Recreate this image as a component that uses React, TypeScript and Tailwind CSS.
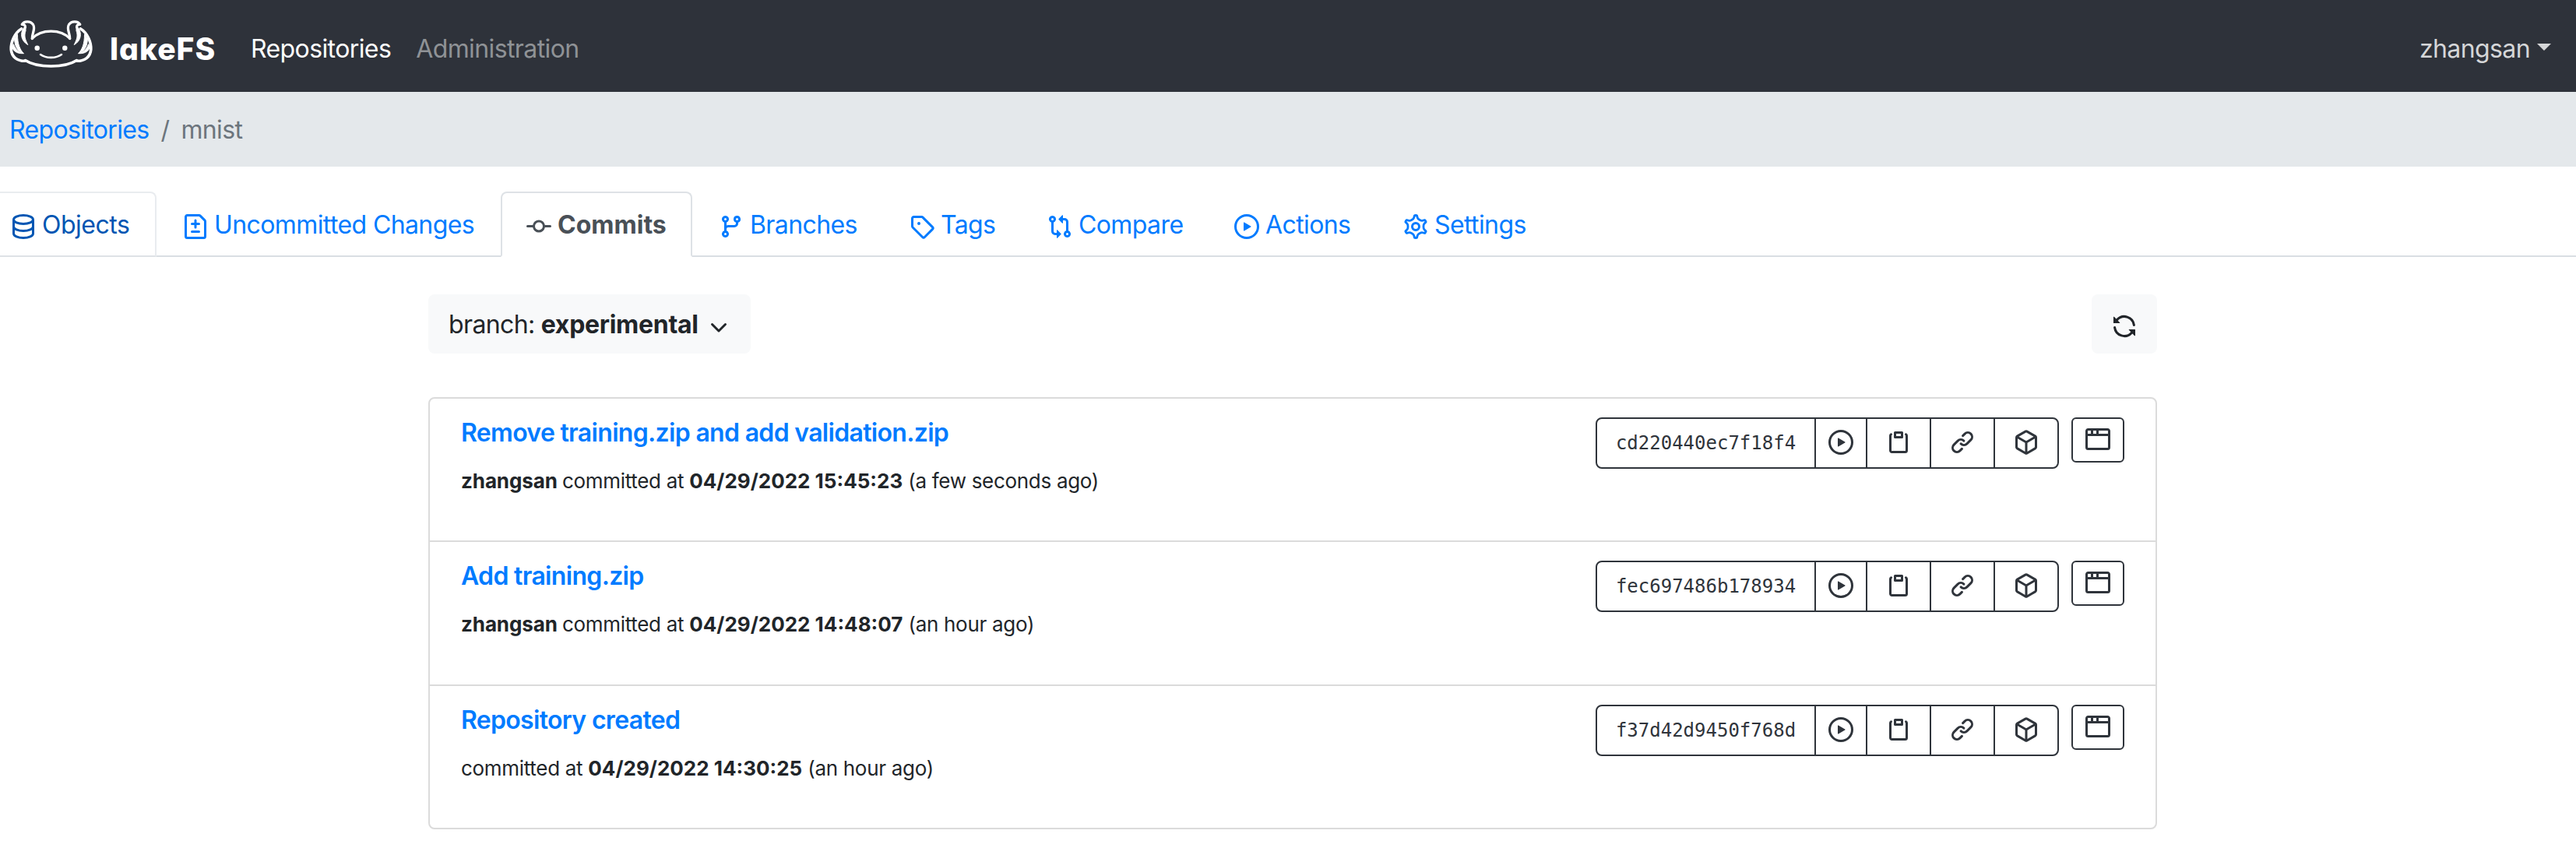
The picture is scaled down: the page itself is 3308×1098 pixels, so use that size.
import React from 'react';

function LogoSide() {
  return (
    <>
      <path d="M29.300 23.500 C29 17 34 11 30.500 5.500 C27 0.500 19 0.800 16.200 5.400 C20.500 5.500 21.500 8 19.700 11.500" strokeWidth="3.200" />
      <path d="M15.500 11 C7 16 1.800 28 2.200 37.500 C3 47 10 52.500 20.500 52.300" strokeWidth="3.600" />
      <path d="M19.500 8.500 C13.500 15 14 26 23.800 31.500 C20.500 25 18.500 20 21 13.500 Z" fill="#fff" strokeWidth="1" />
      <path d="M6.500 23.500 C6.800 33 10 40 18.500 42.800 C13.500 37.500 10.500 31 10.500 18.500 Z" fill="#fff" strokeWidth="1" />
      <path d="M3 34 C5 39.500 9.500 43 17.500 42.700 C12 41 8 38 5.500 31 Z" fill="#fff" strokeWidth="1" />
    </>
  );
}

function Logo() {
  return (
    <svg width="107" height="62" viewBox="0 0 107 62" fill="none" stroke="#fff" strokeLinecap="round" strokeLinejoin="round" className="-mt-[12px] block shrink-0">
      <LogoSide />
      <g transform="translate(107 0) scale(-1 1)"><LogoSide /></g>
      <path d="M29.300 23.500 C41 11 66 11 77.700 23.500" strokeWidth="3.200" />
      <path d="M20.500 51.500 C36 61.500 71 61.500 86.500 51.500" strokeWidth="3.400" />
      <path d="M40 44 C47 49.200 60 49.200 67 44" strokeWidth="2.600" />
      <circle cx="35.700" cy="35.700" r="3.200" fill="#fff" stroke="none" />
      <circle cx="71.300" cy="35.700" r="3.200" fill="#fff" stroke="none" />
    </svg>
  );
}

type IconProps = { className?: string };

function icon(d: string) {
  return function Icon({ className }: IconProps) {
    return (
      <svg viewBox="0 0 16 16" fill="currentColor" fillRule="evenodd" className={className}>
        <path d={d} />
      </svg>
    );
  };
}

const FileDiff = icon('M2.75 1.5a.25.25 0 00-.25.25v12.5c0 .138.112.25.25.25h10.5a.25.25 0 00.25-.25V4.664a.25.25 0 00-.073-.177l-2.914-2.914a.25.25 0 00-.177-.073H2.75zM1 1.75C1 .784 1.784 0 2.75 0h7.586c.464 0 .909.184 1.237.513l2.914 2.914c.329.328.513.773.513 1.237v9.586A1.75 1.75 0 0113.25 16H2.75A1.75 1.75 0 011 14.25V1.75zm7 1.5a.75.75 0 01.75.75v1.5h1.5a.75.75 0 010 1.5h-1.5v1.5a.75.75 0 01-1.5 0V7h-1.5a.75.75 0 010-1.5h1.5V4A.75.75 0 018 3.25zm-3 8a.75.75 0 01.75-.75h4.5a.75.75 0 010 1.5h-4.5a.75.75 0 01-.75-.75z');
const GitCommit = icon('M10.5 7.75a2.5 2.5 0 11-5 0 2.5 2.5 0 015 0zm1.43.75a4.002 4.002 0 01-7.86 0H.75a.75.75 0 110-1.5h3.32a4.001 4.001 0 017.86 0h3.32a.75.75 0 110 1.5h-3.32z');
const GitBranch = icon('M11.75 2.5a.75.75 0 100 1.5.75.75 0 000-1.5zm-2.25.75a2.25 2.25 0 113 2.122V6A2.5 2.5 0 0110 8.5H6a1 1 0 00-1 1v1.128a2.251 2.251 0 11-1.5 0V5.372a2.25 2.25 0 111.5 0v1.836A2.492 2.492 0 016 7h4a1 1 0 001-1v-.628A2.25 2.25 0 019.5 3.25zM4.25 12a.75.75 0 100 1.5.75.75 0 000-1.5zM3.5 3.25a.75.75 0 111.5 0 .75.75 0 01-1.5 0z');
const Tag = icon('M2.5 7.775V2.75a.25.25 0 01.25-.25h5.025a.25.25 0 01.177.073l6.25 6.25a.25.25 0 010 .354l-5.025 5.025a.25.25 0 01-.354 0l-6.25-6.25a.25.25 0 01-.073-.177zm-1.5 0V2.75C1 1.784 1.784 1 2.75 1h5.025c.464 0 .91.184 1.238.513l6.25 6.25a1.75 1.75 0 010 2.474l-5.026 5.026a1.75 1.75 0 01-2.474 0l-6.25-6.25A1.75 1.75 0 011 7.775zM6 5a1 1 0 100 2 1 1 0 000-2z');
const GitCompare = icon('M9.573.677L7.177 3.073a.25.25 0 000 .354l2.396 2.396A.25.25 0 0010 5.646V4h1a1 1 0 011 1v5.628a2.251 2.251 0 101.5 0V5A2.5 2.5 0 0011 2.5h-1V.854a.25.25 0 00-.427-.177zM6 12v-1.646a.25.25 0 01.427-.177l2.396 2.396a.25.25 0 010 .354l-2.396 2.396A.25.25 0 016 15.146V13.5H5A2.5 2.5 0 012.5 11V5.372a2.25 2.25 0 111.5 0V11a1 1 0 001 1h1zM4 3.25a.75.75 0 10-1.5 0 .75.75 0 001.5 0zM12.75 12a.75.75 0 100 1.5.75.75 0 000-1.5z');
const Play = icon('M1.5 8a6.5 6.5 0 1113 0 6.5 6.5 0 01-13 0zM8 0a8 8 0 100 16A8 8 0 008 0zM6.379 5.227A.25.25 0 006 5.442v5.117a.25.25 0 00.379.214l4.264-2.559a.25.25 0 000-.428L6.379 5.227z');
const ChevronDown = icon('M12.78 6.22a.75.75 0 010 1.06l-4.25 4.25a.75.75 0 01-1.06 0L3.22 7.28a.75.75 0 011.06-1.06L8 9.94l3.72-3.72a.75.75 0 011.06 0z');
const Sync = icon('M8 2.5a5.487 5.487 0 00-4.131 1.869l1.204 1.204A.25.25 0 014.896 6H1.25A.25.25 0 011 5.75V2.104a.25.25 0 01.427-.177l1.38 1.38A7.001 7.001 0 0114.95 7.16a.75.75 0 11-1.49.178A5.501 5.501 0 008 2.5zM1.705 8.005a.75.75 0 01.834.656 5.501 5.501 0 009.592 2.97l-1.204-1.204a.25.25 0 01.177-.427h3.646a.25.25 0 01.25.25v3.646a.25.25 0 01-.427.177l-1.38-1.38A7.001 7.001 0 011.05 8.84a.75.75 0 01.656-.834z');
const Paste = icon('M5.75 1a.75.75 0 00-.75.75v3c0 .414.336.75.75.75h4.5a.75.75 0 00.75-.75v-3a.75.75 0 00-.75-.75h-4.5zm.75 3V2.5h3V4h-3zm-2.874-.467a.75.75 0 00-.752-1.298A1.75 1.75 0 002 3.75v9.5c0 .966.784 1.75 1.75 1.75h8.5A1.75 1.75 0 0014 13.25v-9.5a1.75 1.75 0 00-.874-1.515.75.75 0 10-.752 1.298.25.25 0 01.126.217v9.5a.25.25 0 01-.25.25h-8.5a.25.25 0 01-.25-.25v-9.5a.25.25 0 01.126-.217z');
const Link = icon('M7.775 3.275a.75.75 0 001.06 1.06l1.25-1.25a2 2 0 112.83 2.83l-2.5 2.5a2 2 0 01-2.83 0 .75.75 0 00-1.06 1.06 3.5 3.5 0 004.95 0l2.5-2.5a3.5 3.5 0 00-4.95-4.95l-1.25 1.25zm-4.69 9.64a2 2 0 010-2.83l2.5-2.5a2 2 0 012.83 0 .75.75 0 001.06-1.06 3.5 3.5 0 00-4.95 0l-2.5 2.5a3.5 3.5 0 004.95 4.95l1.25-1.25a.75.75 0 00-1.06-1.06l-1.25 1.25a2 2 0 01-2.83 0z');
const Package = icon('M8.878.392a1.75 1.75 0 00-1.756 0l-5.25 3.045A1.75 1.75 0 001 4.951v6.098c0 .624.332 1.2.872 1.514l5.25 3.045a1.75 1.75 0 001.756 0l5.25-3.045c.54-.313.872-.89.872-1.514V4.951c0-.624-.332-1.2-.872-1.514L8.878.392zM7.875 1.69a.25.25 0 01.25 0l4.63 2.685L8 7.133 3.245 4.375l4.63-2.685zM2.5 5.677v5.372c0 .09.047.171.125.216l4.625 2.683V8.432L2.5 5.677zm6.25 8.271l4.625-2.683a.25.25 0 00.125-.216V5.677L8.75 8.432v5.516z');
const Browser = icon('M0 2.75C0 1.784.784 1 1.75 1h12.5c.966 0 1.75.784 1.75 1.75v10.5A1.75 1.75 0 0114.25 15H1.75A1.75 1.75 0 010 13.25V2.75zm1.75-.25a.25.25 0 00-.25.25V4.5h2v-2H1.75zM5 2.5v2h2v-2H5zm3.5 0v2h6V2.75a.25.25 0 00-.25-.25H8.5zm6 3.5h-13v7.25c0 .138.112.25.25.25h12.5a.25.25 0 00.25-.25V6z');

function Database({ className }: IconProps) {
  return (
    <svg viewBox="0 0 16 16" fill="none" stroke="currentColor" strokeWidth="1.5" className={className}>
      <ellipse cx="8" cy="3.500" rx="6.250" ry="2.750" />
      <path d="M1.750 3.500 V12.500 C1.750 14 4.550 15.250 8 15.250 C11.450 15.250 14.250 14 14.250 12.500 V3.500" />
      <path d="M1.750 8 C1.750 9.500 4.550 10.750 8 10.750 C11.450 10.750 14.250 9.500 14.250 8" />
    </svg>
  );
}

function Gear({ className }: IconProps) {
  return (
    <svg viewBox="0 0 16 16" fill="none" stroke="currentColor" strokeLinejoin="round" className={className}>
      <path
        transform="translate(8 8) scale(1.115) translate(-8 -8)"
        strokeWidth="1.250"
        d="M7.429 1.525a6.593 6.593 0 011.142 0c.036.003.108.036.137.146l.289 1.105c.147.56.55.967.997 1.189.174.086.341.183.501.29.417.278.97.423 1.53.27l1.102-.303c.11-.03.175.016.195.046.219.31.41.641.573.989.014.031.022.11-.059.19l-.815.806c-.411.406-.562.957-.53 1.456a4.588 4.588 0 010 .582c-.032.499.119 1.05.53 1.456l.815.806c.08.08.073.159.059.19a6.494 6.494 0 01-.573.99c-.02.029-.086.074-.195.045l-1.103-.303c-.559-.153-1.112-.008-1.529.27-.16.107-.327.204-.5.29-.449.222-.851.628-.998 1.189l-.289 1.105c-.029.11-.101.143-.137.146a6.613 6.613 0 01-1.142 0c-.036-.003-.108-.037-.137-.146l-.289-1.105c-.147-.56-.55-.967-.997-1.189a4.502 4.502 0 01-.501-.29c-.417-.278-.97-.423-1.53-.27l-1.102.303c-.11.03-.175-.016-.195-.046a6.492 6.492 0 01-.573-.989c-.014-.031-.022-.11.059-.19l.815-.806c.411-.406.562-.957.53-1.456a4.587 4.587 0 010-.582c.032-.499-.119-1.05-.53-1.456l-.815-.806c-.08-.08-.073-.159-.059-.19a6.44 6.44 0 01.573-.99c.02-.029.086-.075.195-.045l1.103.303c.559.153 1.112.008 1.529-.27.16-.107.327-.204.5-.29.449-.222.851-.628.998-1.189l.289-1.105c.029-.11.101-.143.137-.146z"
      />
      <circle cx="8" cy="8" r="2.250" strokeWidth="1.500" />
    </svg>
  );
}

type Tab = { label: string; Icon: React.ComponentType<IconProps>; box: string; state?: 'active' | 'hover' };

const tabs: Tab[] = [
  { label: 'Objects', Icon: Database, box: 'w-[201px] pl-[14px]', state: 'hover' },
  { label: 'Uncommitted Changes', Icon: FileDiff, box: 'w-[442px] pl-[32px]' },
  { label: 'Commits', Icon: GitCommit, box: 'w-[246px] pl-[31px]', state: 'active' },
  { label: 'Branches', Icon: GitBranch, box: 'w-[245px] pl-[32px]' },
  { label: 'Tags', Icon: Tag, box: 'w-[177px] pl-[32px]' },
  { label: 'Compare', Icon: GitCompare, box: 'w-[240px] pl-[32px]' },
  { label: 'Actions', Icon: Play, box: 'w-[217px] pl-[32px]' },
  { label: 'Settings', Icon: Gear, box: 'w-[230px] pl-[32px]' },
];

const tabState = {
  active: 'rounded-t-[8px] border-[#dee2e6] border-b-white bg-white font-bold text-[#495057]',
  hover: 'rounded-tr-[8px] border-l-0 border-[#e9ecef] border-b-[#dee2e6] text-[#0056b3] tracking-[-0.5px]',
  idle: 'border-transparent text-[#007bff] tracking-[-0.6px]',
};

const commits = [
  { message: 'Remove training.zip and add validation.zip', author: 'zhangsan', date: '04/29/2022 15:45:23', ago: 'a few seconds ago', id: 'cd220440ec7f18f4', row: 'h-[182px]' },
  { message: 'Add training.zip', author: 'zhangsan', date: '04/29/2022 14:48:07', ago: 'an hour ago', id: 'fec697486b178934', row: 'h-[185px] border-t-2' },
  { message: 'Repository created', author: '', date: '04/29/2022 14:30:25', ago: 'an hour ago', id: 'f37d42d9450f768d', row: 'h-[184px] border-t-2' },
];

const actions = [
  { key: 'run', Icon: Play, width: 'w-[66px]' },
  { key: 'copy', Icon: Paste, width: 'w-[82px]' },
  { key: 'link', Icon: Link, width: 'w-[82px]' },
  { key: 'package', Icon: Package, width: 'w-[82px]' },
];

export default function App() {
  return (
    <div className="h-[1098px] w-full overflow-hidden bg-white font-['Inter','Liberation_Sans',sans-serif] text-[32px] leading-[48px] text-[#212529]">
      <nav className="flex h-[118px] items-center bg-[#2e323a] pl-[12px] pr-[32px] pt-[8px] text-white">
        <Logo />
        <span className="ml-[22px] w-[181px] text-[39px] font-extrabold tracking-[1px] [font-feature-settings:'cv11']">lakeFS</span>
        <span className="tracking-[-0.6px]">Repositories</span>
        <span className="ml-[32px] tracking-[-0.6px] text-[#8f9296]">Administration</span>
        <span className="ml-auto tracking-[-0.6px] text-[#d5d6d8]">zhangsan</span>
        <span className="mb-[5px] ml-[9px] border-x-[9.500px] border-t-[9px] border-x-transparent border-t-[#d5d6d8]" />
      </nav>
      <div className="flex h-[96px] items-center bg-[#e4e8eb] pl-[12px] pt-[2px] tracking-[-0.650px]">
        <span className="text-[#007bff]">Repositories</span>
        <span className="ml-[15px] text-[#6c757d]">/</span>
        <span className="ml-[15px] text-[#6c757d]">mnist</span>
      </div>
      <div className="mt-[32px] flex h-[84px] border-b-2 border-[#d9dee3]">
        {tabs.map(({ label, Icon, box, state }) => (
          <div key={label} className={`${box} flex h-[84px] items-center whitespace-nowrap border-2 pt-[2px] ${tabState[state ?? 'idle']}`}>
            <Icon className="mr-[8px] mt-[4px] size-[32px] shrink-0" />
            {label}
          </div>
        ))}
      </div>
      <main className="ml-[550px] mr-[538px] pt-[48px]">
        <div className="flex items-center justify-between">
          <div className="flex h-[76px] w-[414px] items-center rounded-[8px] bg-[#f8f9fa] pl-[26px] pt-[1px]">
            <span className="tracking-[-0.6px]">branch:</span>
            <b className="ml-[8px] tracking-[-0.3px]">experimental</b>
            <ChevronDown className="ml-[10px] mt-[5px] size-[32px]" />
          </div>
          <div className="flex h-[76px] w-[84px] items-center justify-center rounded-[8px] bg-[#f8f9fa]">
            <Sync className="mt-[6px] size-[32px]" />
          </div>
        </div>
        <div className="mt-[56px] rounded-[8px] border-2 border-[#dbdbdb]">
          {commits.map((c) => (
            <div key={c.id} className={`${c.row} flex justify-between border-[#dbdbdb] px-[40px] pt-[24px]`}>
              <div>
                <div className="font-semibold leading-[40px] tracking-[-0.680px] text-[#007bff]">{c.message}</div>
                <div className="mt-[22px] text-[26px] leading-[40px] tracking-[-0.300px]">
                  {c.author && <b className="tracking-[-0.100px]">{c.author} </b>}committed at <b className="tracking-normal">{c.date}</b> ({c.ago})
                </div>
              </div>
              <div className="flex items-start text-[#2f343b]">
                <div className="flex h-[66px] rounded-[8px] border-2 border-[#2f343b]">
                  <div className="flex w-[279px] items-center justify-center font-['DejaVu_Sans_Mono',monospace] text-[24px]">{c.id}</div>
                  {actions.map(({ key, Icon, width }) => (
                    <div key={key} className={`${width} flex items-center justify-center border-l-2 border-[#2f343b] pb-[2px]`}>
                      <Icon className="size-[32px]" />
                    </div>
                  ))}
                </div>
                <div className="ml-[16px] flex h-[58px] w-[68px] items-center justify-center rounded-[6px] border-2 border-[#2f343b] pb-[2px]">
                  <Browser className="size-[32px]" />
                </div>
              </div>
            </div>
          ))}
        </div>
      </main>
    </div>
  );
}
